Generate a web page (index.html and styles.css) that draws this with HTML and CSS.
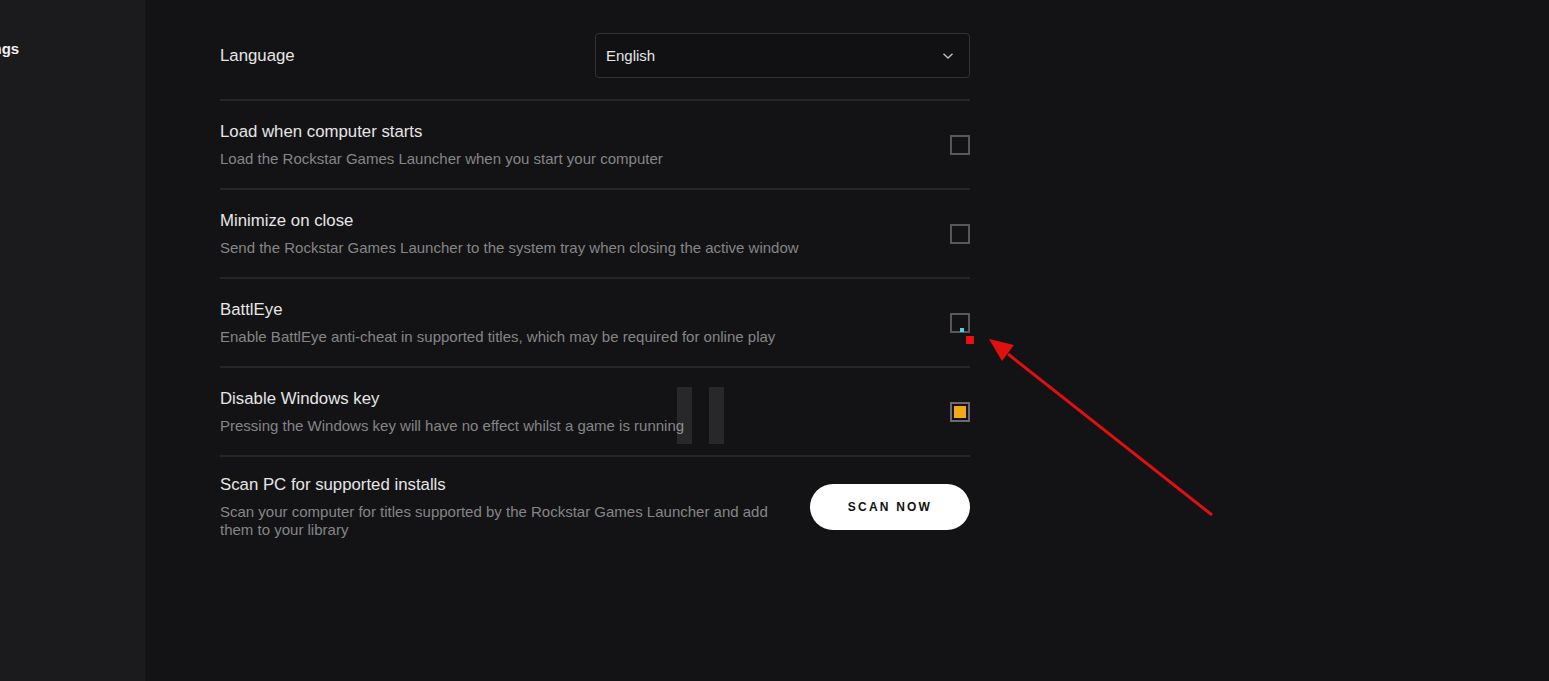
FILE: index.html
```html
<!DOCTYPE html>
<html lang="en">
<head>
<meta charset="utf-8">
<title>Settings</title>
<link rel="stylesheet" href="styles.css">
</head>
<body>
<div class="app">
  <aside class="sidebar">
    <div class="nav-item">Settings</div>
  </aside>
  <main class="main">
    <div class="settings">
      <div class="row row-lang">
        <div class="title">Language</div>
        <div class="select">
          <span>English</span>
          <svg class="chev" width="12" height="8" viewBox="0 0 12 8"><path d="M1.5 1.8 L6 6 L10.5 1.8" fill="none" stroke="#bdbdbd" stroke-width="1.4"/></svg>
        </div>
      </div>
      <div class="row">
        <div class="text">
          <div class="title">Load when computer starts</div>
          <div class="desc">Load the Rockstar Games Launcher when you start your computer</div>
        </div>
        <div class="check"></div>
      </div>
      <div class="row">
        <div class="text">
          <div class="title">Minimize on close</div>
          <div class="desc">Send the Rockstar Games Launcher to the system tray when closing the active window</div>
        </div>
        <div class="check"></div>
      </div>
      <div class="row">
        <div class="text">
          <div class="title">BattlEye</div>
          <div class="desc">Enable BattlEye anti-cheat in supported titles, which may be required for online play</div>
        </div>
        <div class="check check-mark"><span class="cursor-dot"></span><span class="red-dot"></span></div>
      </div>
      <div class="row">
        <div class="text">
          <div class="title">Disable Windows key</div>
          <div class="desc">Pressing the Windows key will have no effect whilst a game is running</div>
        </div>
        <div class="check checked"><span class="fill"></span></div>
      </div>
      <div class="row row-last">
        <div class="text">
          <div class="title">Scan PC for supported installs</div>
          <div class="desc narrow">Scan your computer for titles supported by the Rockstar Games Launcher and add them to your library</div>
        </div>
        <button class="scan">SCAN NOW</button>
      </div>
    </div>
    <div class="pause"><span></span><span></span></div>
  </main>
</div>
<svg class="arrow" width="1549" height="681" viewBox="0 0 1549 681">
  <line x1="1212" y1="515" x2="1008" y2="354" stroke="#e01010" stroke-width="3"/>
  <polygon points="989,339 1014,345 1002,361" fill="#e01010"/>
</svg>
</body>
</html>
```

FILE: styles.css
```css
html, body {
  margin: 0;
  padding: 0;
  background: #131315;
  font-family: "Liberation Sans", Arial, sans-serif;
  height: 100%;
  overflow: hidden;
}

.app {
  display: flex;
  height: 681px;
}

.sidebar {
  width: 145px;
  flex: none;
  background: #1b1b1d;
  overflow: hidden;
  padding-top: 40px;
  box-sizing: border-box;
}

.nav-item {
  color: #f0f0f0;
  font-size: 15px;
  font-weight: bold;
  margin-left: -40px;
  white-space: nowrap;
}

.main {
  position: relative;
  flex: 1;
  padding-left: 75px;
  padding-top: 33px;
}

.settings {
  width: 750px;
}

.row {
  display: flex;
  align-items: center;
  justify-content: space-between;
  padding: 21px 0 20px;
  border-bottom: 2px solid #262628;
}

.row-lang {
  padding: 0 0 21px;
}

.row-last {
  border-bottom: none;
  padding-top: 18px;
  align-items: flex-start;
}

.title {
  color: #e6e6e6;
  font-size: 16.8px;
  line-height: 20px;
}

.desc {
  color: #858587;
  font-size: 15px;
  line-height: 18px;
  margin-top: 8px;
}

.desc.narrow {
  width: 555px;
}

.select {
  width: 375px;
  height: 45px;
  box-sizing: border-box;
  border: 1px solid #333335;
  border-radius: 4px;
  background: #111113;
  display: flex;
  align-items: center;
  justify-content: space-between;
  padding: 0 15px 0 10px;
  color: #e6e6e6;
  font-size: 15px;
}

.check {
  position: relative;
  width: 20px;
  height: 20px;
  box-sizing: border-box;
  border: 2px solid #58585a;
  flex: none;
  display: flex;
  align-items: center;
  justify-content: center;
}

.check.checked {
  border-color: #6a6a6c;
}

.check .fill {
  width: 12px;
  height: 12px;
  background: #f0a81c;
}

.cursor-dot {
  position: absolute;
  left: 8px;
  top: 13px;
  width: 4px;
  height: 4px;
  background: #4fd2d8;
}

.red-dot {
  position: absolute;
  left: 14px;
  top: 21px;
  width: 8px;
  height: 8px;
  background: #e81010;
}

.scan {
  width: 160px;
  height: 46px;
  margin-top: 9px;
  border: none;
  border-radius: 23px;
  background: #ffffff;
  color: #111;
  font-family: "Liberation Sans", Arial, sans-serif;
  font-weight: bold;
  font-size: 12px;
  letter-spacing: 2.2px;
  flex: none;
}

.pause {
  position: absolute;
  left: 532px;
  top: 387px;
  display: flex;
  gap: 17px;
  pointer-events: none;
}

.pause span {
  width: 15px;
  height: 57px;
  background: rgba(255, 255, 255, 0.09);
}

.arrow {
  position: absolute;
  left: 0;
  top: 0;
  pointer-events: none;
}
```
